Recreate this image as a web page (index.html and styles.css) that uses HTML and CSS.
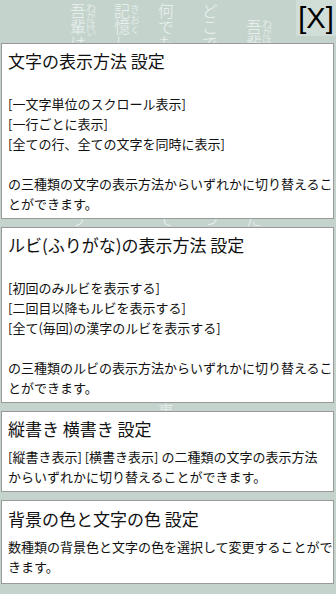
FILE: index.html
```html
<!DOCTYPE html>
<html lang="ja">
<head>
<meta charset="utf-8">
<title>設定</title>
<link rel="stylesheet" href="styles.css">
</head>
<body>
<div class="screen">
  <div class="backdrop" aria-hidden="true">
    <p class="col">　<ruby>吾輩<rt>わがはい</rt></ruby>は猫である。名前はまだ無い。</p>
    <p class="col">どこで生れたかとんと<ruby>見当<rt>けんとう</rt></ruby>がつかぬ。</p>
    <p class="col">何でも<ruby>薄暗<rt>うすぐら</rt></ruby>いじめじめした所でニャーニャー泣いていた事だけは</p>
    <p class="col"><ruby>記憶<rt>きおく</rt></ruby>している。</p>
    <p class="col"><ruby>吾輩<rt>わがはい</rt></ruby>はここで始めて人間というものを見た。</p>
  </div>

  <button class="close">[X]</button>

  <main class="list">
    <section class="card">
      <h2 class="card-title">文字の表示方法 設定</h2>
      <ul class="options">
        <li>[一文字単位のスクロール表示]</li>
        <li>[一行ごとに表示]</li>
        <li>[全ての行、全ての文字を同時に表示]</li>
      </ul>
      <p class="desc desc-after-list">の三種類の文字の表示方法からいずれかに切り替えるこ<br>とができます。</p>
    </section>

    <section class="card">
      <h2 class="card-title">ルビ(ふりがな)の表示方法 設定</h2>
      <ul class="options">
        <li>[初回のみルビを表示する]</li>
        <li>[二回目以降もルビを表示する]</li>
        <li>[全て(毎回)の漢字のルビを表示する]</li>
      </ul>
      <p class="desc desc-after-list">の三種類のルビの表示方法からいずれかに切り替えるこ<br>とができます。</p>
    </section>

    <section class="card">
      <h2 class="card-title">縦書き 横書き 設定</h2>
      <p class="desc">[縦書き表示] [横書き表示] の二種類の文字の表示方法<br>からいずれかに切り替えることができます。</p>
    </section>

    <section class="card card-tall">
      <h2 class="card-title">背景の色と文字の色 設定</h2>
      <p class="desc">数種類の背景色と文字の色を選択して変更することがで<br>きます。</p>
    </section>
  </main>
</div>
</body>
</html>
```

FILE: styles.css
```css
* {
  box-sizing: border-box;
}

html, body {
  margin: 0;
  padding: 0;
}

body {
  background: #c4d4cd;
  font-family: "Noto Sans CJK JP", "Noto Sans", sans-serif;
  color: #111;
}

.screen {
  position: relative;
  width: 336px;
  height: 594px;
  overflow: hidden;
}

/* faint vertical novel text behind the cards */
.backdrop {
  position: absolute;
  top: 3px;
  right: 60px;
  height: 600px;
  writing-mode: vertical-rl;
  font-size: 16px;
  line-height: 44px;
  font-weight: 300;
  color: rgba(255, 255, 255, 0.72);
  z-index: 0;
}

.col {
  margin: 0;
  white-space: nowrap;
}

.backdrop rt {
  font-size: 10px;
  letter-spacing: -2px;
}

.close {
  position: absolute;
  top: 0;
  right: 0;
  width: 40px;
  height: 36px;
  margin: 0;
  padding: 0;
  border: none;
  background: #d1ddd7;
  font-family: "Liberation Sans", Arial, sans-serif;
  font-size: 29px;
  line-height: 36px;
  color: #000;
  z-index: 2;
}

.list {
  display: flex;
  flex-direction: column;
  gap: 8px;
  padding: 43px 2px 0 1px;
}

.card {
  position: relative;
  z-index: 1;
  background: #fff;
  border: 1px solid #9a9a9a;
  padding: 6px 0 4px 6px;
}

.card-tall {
  padding-top: 7px;
  padding-bottom: 6px;
}

.card-title {
  margin: 0;
  font-size: 17px;
  line-height: 22px;
  font-weight: 400;
  white-space: nowrap;
}

.options {
  list-style: none;
  margin: 22px 0 0;
  padding: 0;
  font-size: 13px;
  line-height: 20px;
}

.desc {
  margin: 7px 0 0;
  font-size: 13px;
  line-height: 20px;
  white-space: nowrap;
}

.desc-after-list {
  margin-top: 20px;
}
```
